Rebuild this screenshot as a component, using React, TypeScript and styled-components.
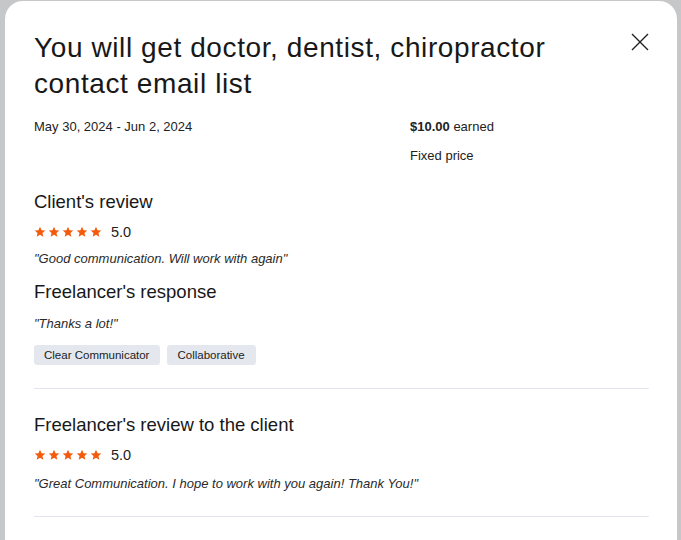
import React from "react";
import styled, { createGlobalStyle } from "styled-components";

const Global = createGlobalStyle`
  html, body { margin: 0; padding: 0; background: #c6c7c9; }
  body { font-family: "Liberation Sans", Arial, sans-serif; color: #181818; overflow: hidden; }
`;

const Backdrop = styled.div`
  width: 681px;
  height: 540px;
  padding: 1px 4px 0 5px;
  box-sizing: border-box;
  overflow: hidden;
`;

const Modal = styled.div`
  background: #fff;
  border-radius: 18px 18px 0 0;
  padding: 29px 28px 40px 29px;
  height: 600px;
  box-sizing: border-box;
`;

const Header = styled.div`
  display: flex;
  justify-content: space-between;
  align-items: flex-start;
`;

const Title = styled.h1`
  margin: 0;
  font-size: 28px;
  line-height: 36px;
  font-weight: 400;
  letter-spacing: 0.6px;
  color: #181818;
  max-width: 550px;
`;

const CloseBtn = styled.button`
  border: 0;
  background: none;
  padding: 0;
  margin: 0 -3px 0 0;
  width: 24px;
  height: 24px;
  cursor: pointer;
  display: flex;
  align-items: center;
  justify-content: center;
`;

const Meta = styled.div`
  display: grid;
  grid-template-columns: 376px 1fr;
  margin-top: 17px;
  font-size: 13px;
  line-height: 16px;
  color: #222;
`;

const MetaCol = styled.div`
  display: flex;
  flex-direction: column;
  gap: 13px;
`;

const Strong = styled.span`
  font-weight: 600;
`;

const SectionTitle = styled.h2<{ $top: number }>`
  margin: ${(p) => p.$top}px 0 0;
  font-size: 18.5px;
  line-height: 24px;
  font-weight: 400;
  color: #181818;
`;

const RatingRow = styled.div`
  display: flex;
  align-items: center;
  gap: 9px;
  margin-top: 10px;
  font-size: 14.5px;
  color: #222;
`;

const Stars = styled.div`
  display: flex;
  gap: 2px;
`;

const Quote = styled.p<{ $top: number }>`
  margin: ${(p) => p.$top}px 0 0;
  font-size: 13px;
  line-height: 16px;
  font-style: italic;
  color: #2a2a2a;
`;

const Tags = styled.div`
  display: flex;
  gap: 7px;
  margin-top: 13px;
`;

const Tag = styled.span`
  background: #e4e8ee;
  border-radius: 3px;
  padding: 0 11px 0 10px;
  height: 20px;
  display: inline-flex;
  align-items: center;
  font-size: 11.5px;
  color: #222;
`;

const Divider = styled.hr<{ $top: number }>`
  border: 0;
  border-top: 1px solid #e2e6ec;
  margin: ${(p) => p.$top}px 0 0;
`;

const Star = () => (
  <svg width="12" height="12" viewBox="0 0 24 24">
    <path
      fill="#f45a0c"
      d="M12 1.5l3.1 7 7.4.6-5.6 4.9 1.7 7.4L12 17.5l-6.6 3.9 1.7-7.4L1.5 9.1l7.4-.6z"
    />
  </svg>
);

const Rating = ({ value }: { value: string }) => (
  <RatingRow>
    <Stars>
      {[0, 1, 2, 3, 4].map((i) => (
        <Star key={i} />
      ))}
    </Stars>
    <span>{value}</span>
  </RatingRow>
);

export default function App() {
  return (
    <>
      <Global />
      <Backdrop>
        <Modal>
          <Header>
            <Title>You will get doctor, dentist, chiropractor contact email list</Title>
            <CloseBtn aria-label="Close">
              <svg width="18" height="18" viewBox="0 0 18 18">
                <path d="M1 1L17 17M17 1L1 17" stroke="#222" strokeWidth="1.4" />
              </svg>
            </CloseBtn>
          </Header>
          <Meta>
            <MetaCol>
              <span>May 30, 2024 - Jun 2, 2024</span>
            </MetaCol>
            <MetaCol>
              <span>
                <Strong>$10.00</Strong> earned
              </span>
              <span>Fixed price</span>
            </MetaCol>
          </Meta>
          <SectionTitle $top={26}>Client's review</SectionTitle>
          <Rating value="5.0" />
          <Quote $top={11}>"Good communication. Will work with again"</Quote>
          <SectionTitle $top={13}>Freelancer's response</SectionTitle>
          <Quote $top={12}>"Thanks a lot!"</Quote>
          <Tags>
            <Tag>Clear Communicator</Tag>
            <Tag>Collaborative</Tag>
          </Tags>
          <Divider $top={23} />
          <SectionTitle $top={24}>Freelancer's review to the client</SectionTitle>
          <Rating value="5.0" />
          <Quote $top={13}>"Great Communication. I hope to work with you again! Thank You!"</Quote>
          <Divider $top={24} />
        </Modal>
      </Backdrop>
    </>
  );
}
